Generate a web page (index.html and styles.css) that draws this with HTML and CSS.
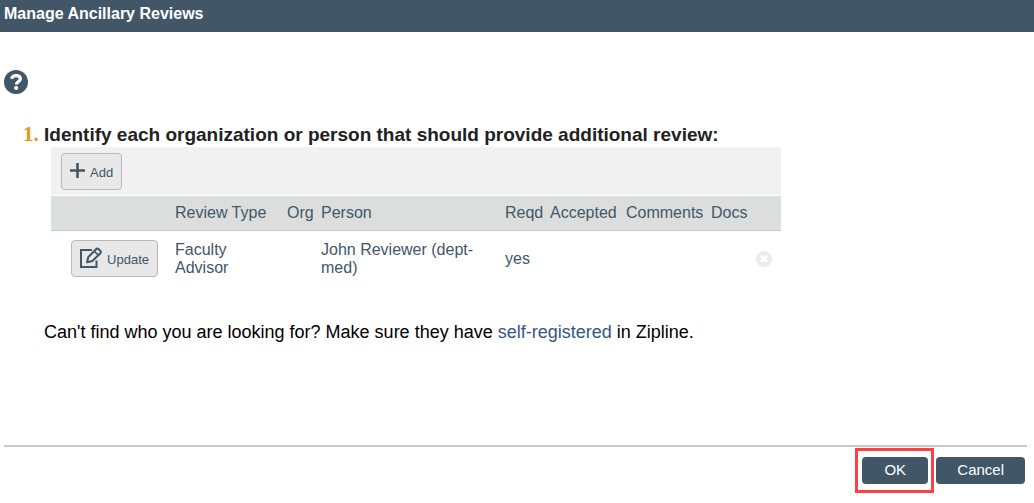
FILE: index.html
```html
<!DOCTYPE html>
<html lang="en">
<head>
    <meta charset="UTF-8">
    <meta name="viewport" content="width=device-width, initial-scale=1.0">
    <title>Manage Ancillary Reviews</title>
    <link rel="stylesheet" href="styles.css">
</head>
<body>
    <header class="title-bar">
        <h1>Manage Ancillary Reviews</h1>
    </header>

    <main class="content">
        <button type="button" class="icon-btn" aria-label="Help">
            <svg width="24" height="24" viewBox="0 0 24 24">
                <circle cx="12" cy="12" r="12" fill="#415767"/>
                <path d="M7.500 8.800C8.300 6.400 9.800 5.600 12 5.600c2.600 0 4.400 1.200 4.400 3.200c0 2.900-4 2.600-4 5.600" fill="none" stroke="#fff" stroke-width="3.200"/>
                <circle cx="12.200" cy="18" r="2.100" fill="#fff"/>
            </svg>
        </button>

        <section class="question">
            <span class="number">1.</span>
            <div class="question-body">
                <h2>Identify each organization or person that should provide additional review:</h2>

                <div class="reviews">
                    <div class="toolbar">
                        <button type="button" class="btn">
                            <svg width="15" height="15" viewBox="0 0 15 15">
                                <path d="M7.500 0v15M0 7.500h15" fill="none" stroke="#415767" stroke-width="2.600"/>
                            </svg>
                            Add
                        </button>
                    </div>
                    <table>
                        <colgroup>
                            <col class="col-action">
                            <col class="col-type">
                            <col class="col-org">
                            <col class="col-person">
                            <col class="col-reqd">
                            <col class="col-accepted">
                            <col class="col-comments">
                            <col class="col-docs">
                            <col class="col-delete">
                        </colgroup>
                        <thead>
                            <tr>
                                <th></th>
                                <th>Review Type</th>
                                <th>Org</th>
                                <th>Person</th>
                                <th>Reqd</th>
                                <th>Accepted</th>
                                <th>Comments</th>
                                <th>Docs</th>
                                <th></th>
                            </tr>
                        </thead>
                        <tbody>
                            <tr>
                                <td class="action">
                                    <button type="button" class="btn">
                                        <svg width="22" height="22" viewBox="0 0 22 22" fill="none" stroke="#415767">
                                            <path d="M12 3H1v17h15.500v-6.500" stroke-width="2"/>
                                            <path d="M7 15.200l1.200-5L16 2.300a2 2 0 0 1 2.800 0l1.400 1.400a2 2 0 0 1 0 2.800L12.300 14z" stroke-width="2" stroke-linejoin="round"/>
                                            <path d="M14.200 4.100l4.200 4.200" stroke-width="1.600"/>
                                        </svg>
                                        Update
                                    </button>
                                </td>
                                <td>Faculty Advisor</td>
                                <td></td>
                                <td>John Reviewer (dept-med)</td>
                                <td>yes</td>
                                <td></td>
                                <td></td>
                                <td></td>
                                <td class="delete">
                                    <button type="button" class="icon-btn" aria-label="Delete">
                                        <svg width="16" height="16" viewBox="0 0 16 16">
                                            <circle cx="8" cy="8" r="8" fill="#ebebeb"/>
                                            <path d="M5 5l6 6M11 5l-6 6" stroke="#fff" stroke-width="3"/>
                                        </svg>
                                    </button>
                                </td>
                            </tr>
                        </tbody>
                    </table>
                </div>

                <p class="hint">Can't find who you are looking for? Make sure they have <a href="#">self-registered</a> in Zipline.</p>
            </div>
        </section>
    </main>

    <footer class="footer">
        <span class="highlight"><button type="button" class="btn-primary">OK</button></span>
        <button type="button" class="btn-primary">Cancel</button>
    </footer>
</body>
</html>
```

FILE: styles.css
```css
* {
    box-sizing: border-box;
}
body {
    margin: 0;
    min-height: 100vh;
    display: flex;
    flex-direction: column;
    background-color: #fff;
    color: #000;
    font-family: "Liberation Sans", Arial, sans-serif;
    font-size: 16px;
}
.title-bar {
    padding: 4px 4px 8px;
    background-color: #415767;
    color: #fff;
}
h1 {
    margin: 0;
    font-size: 16px;
    line-height: 20px;
}
.content {
    padding: 38px 4px 20px;
}
button {
    font-family: inherit;
    cursor: pointer;
}
.icon-btn {
    display: block;
    padding: 0;
    border: none;
    background: none;
}
.icon-btn svg {
    display: block;
}
.question {
    display: flex;
    margin-top: 28px;
    padding-left: 19px;
}
.number {
    width: 21px;
    color: #e8980e;
    font-family: "Liberation Serif", serif;
    font-size: 21px;
    font-weight: bold;
    line-height: 25px;
}
h2 {
    margin: 0;
    color: #222;
    font-size: 19px;
    line-height: 25px;
}
.reviews {
    width: 730px;
    max-width: 100%;
    margin-left: 7px;
    color: #415767;
}
.toolbar {
    margin-bottom: 1px;
    padding: 6px 10px 5px;
    background-color: #f1f1f1;
}
.btn {
    display: inline-flex;
    align-items: center;
    gap: 5px;
    height: 37px;
    padding: 2px 8px 0;
    border: 1px solid #b7b9bb;
    border-radius: 4px;
    background-color: #e8e8e8;
    color: #415767;
    font-size: 13px;
}
.toolbar .btn {
    display: flex;
}
.btn svg {
    margin-bottom: 4px;
}
table {
    width: 100%;
    border-collapse: collapse;
    table-layout: fixed;
}
th, td {
    padding: 9px 4px;
    text-align: left;
    font-weight: normal;
    line-height: 18px;
}
th {
    height: 34px;
    padding: 8px 4px;
    border-bottom: 1px solid #c8caca;
    background-color: #dcdedd;
    white-space: nowrap;
}
td {
    height: 56px;
}
.action {
    padding-right: 13px;
    text-align: right;
}
.action .btn {
    vertical-align: middle;
}
.delete {
    padding-left: 5px;
}
.col-action { width: 120px; }
.col-type { width: 112px; }
.col-org { width: 34px; }
.col-person { width: 184px; }
.col-reqd { width: 45px; }
.col-accepted { width: 76px; }
.col-comments { width: 85px; }
.col-docs { width: 44px; }
.hint {
    margin: 34px 0 0;
    font-size: 18px;
    line-height: 22px;
}
a {
    color: #34587f;
    text-decoration: none;
}
.footer {
    display: flex;
    justify-content: flex-end;
    gap: 8px;
    margin: auto 7px 0 4px;
    padding: 10px 2px 19px;
    border-top: 2px solid #c9c9c9;
}
.btn-primary {
    display: block;
    min-width: 66px;
    padding: 4px 21px 5px;
    border: none;
    border-radius: 4px;
    background-color: #415767;
    color: #fff;
    font-size: 15px;
    line-height: 18px;
}
.highlight {
    position: relative;
}
.highlight::after {
    content: "";
    position: absolute;
    inset: -9px -6px -9px -7px;
    border: 3px solid #fb4141;
    pointer-events: none;
}
```
